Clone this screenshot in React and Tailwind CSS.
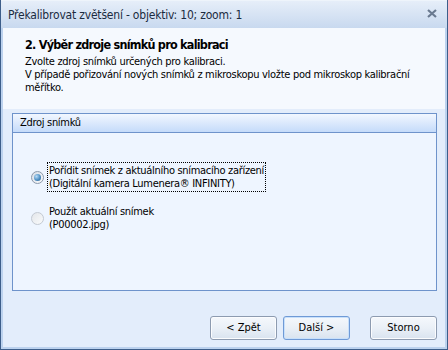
import React from "react";

const Radio = ({ checked }) => (
  <div
    className={`w-[13px] h-[13px] rounded-full border shrink-0 flex items-center justify-center ${
      checked
        ? "border-[#8c99ab] bg-gradient-to-br from-[#d9dee6] to-[#f7f9fb]"
        : "border-[#c3c9d2] bg-gradient-to-br from-[#e3e6ea] to-[#fafbfc]"
    }`}
  >
    {checked && (
      <div className="w-[7px] h-[7px] rounded-full bg-[radial-gradient(circle_at_35%_35%,#b9dcf6,#4d8fc4_55%,#2c5a86)]" />
    )}
  </div>
);

const Button = ({ children, focused }) => (
  <button
    className={`w-[67px] h-[24px] rounded-[3px] border text-[11px] text-black flex items-center justify-center bg-gradient-to-b from-[#f5f8fc] via-[#eaf0f7] to-[#d9e3ef] ${
      focused
        ? "border-[#6f9ad6] shadow-[inset_0_0_0_1px_#c8e0fb]"
        : "border-[#8d9bb0] shadow-[inset_0_0_0_1px_#fbfcfe]"
    }`}
  >
    {children}
  </button>
);

export default function App() {
  return (
    <div className="w-[448px] h-[350px] flex flex-col bg-[#3d5e8a] px-px pb-px font-['DejaVu_Sans_Condensed','DejaVu_Sans',sans-serif] text-black">
      {/* title bar */}
      <div className="h-[28px] shrink-0 flex items-center justify-between pl-[7px] pr-[10px] bg-gradient-to-b from-[#e6eef9] to-[#c8d9ef] border-t border-[#eef4fb]">
        <span className="text-[12px] tracking-[-0.2px] text-[#1b2b40]">
          Překalibrovat zvětšení - objektiv: 10; zoom: 1
        </span>
        <svg width="10" height="9" viewBox="0 0 10 9" className="mb-[2px]">
          <path d="M1 1 L9 8 M9 1 L1 8" stroke="#6a7a90" strokeWidth="2.2" />
        </svg>
      </div>

      {/* body */}
      <div className="flex-1 flex flex-col bg-[#e3edfb] border-x-2 border-b-2 border-[#bcd2ee]">
        {/* header */}
        <div className="h-[81px] shrink-0 bg-[#f5f9fe] pl-[22px] pt-[9px]">
          <div className="text-[12.5px] tracking-[-0.75px] font-bold leading-[16px]">
            2. Výběr zdroje snímků pro kalibraci
          </div>
          <div className="text-[11px] tracking-[-0.3px] leading-[13px] mt-[2px]">
            <div>Zvolte zdroj snímků určených pro kalibraci.</div>
            <div>V případě pořizování nových snímků z mikroskopu vložte pod mikroskop kalibrační</div>
            <div>měřítko.</div>
          </div>
        </div>

        {/* group box */}
        <div className="mt-[4px] ml-[9px] mr-[8px] h-[178px] border border-[#6e93cb] bg-[#eef5ff] flex flex-col">
          <div className="h-[19px] shrink-0 border-b border-[#6e93cb] bg-gradient-to-b from-[#f2f7ff] to-[#c5dbfa] flex items-center pl-[7px] text-[11px] tracking-[-0.3px]">
            Zdroj snímků
          </div>
          <div className="flex flex-col pl-[18px] pt-[29px] gap-[13px] text-[11px] tracking-[-0.3px]">
            <div className="flex items-center gap-[3px]">
              <Radio checked />
              <div className="border border-dotted border-black px-[1px] py-[1px] leading-[13px]">
                <div>Pořídit snímek z aktuálního snímacího zařízení</div>
                <div>(Digitální kamera Lumenera® INFINITY)</div>
              </div>
            </div>
            <div className="flex items-center gap-[5px]">
              <Radio />
              <div className="leading-[13px]">
                <div>Použít aktuální snímek</div>
                <div>(P00002.jpg)</div>
              </div>
            </div>
          </div>
        </div>

        {/* buttons */}
        <div className="flex justify-end items-center mt-[25px] pr-[8px]">
          <Button>&lt; Zpět</Button>
          <div className="w-[6px]" />
          <Button focused>Další &gt;</Button>
          <div className="w-[20px]" />
          <Button>Storno</Button>
        </div>
      </div>
    </div>
  );
}
